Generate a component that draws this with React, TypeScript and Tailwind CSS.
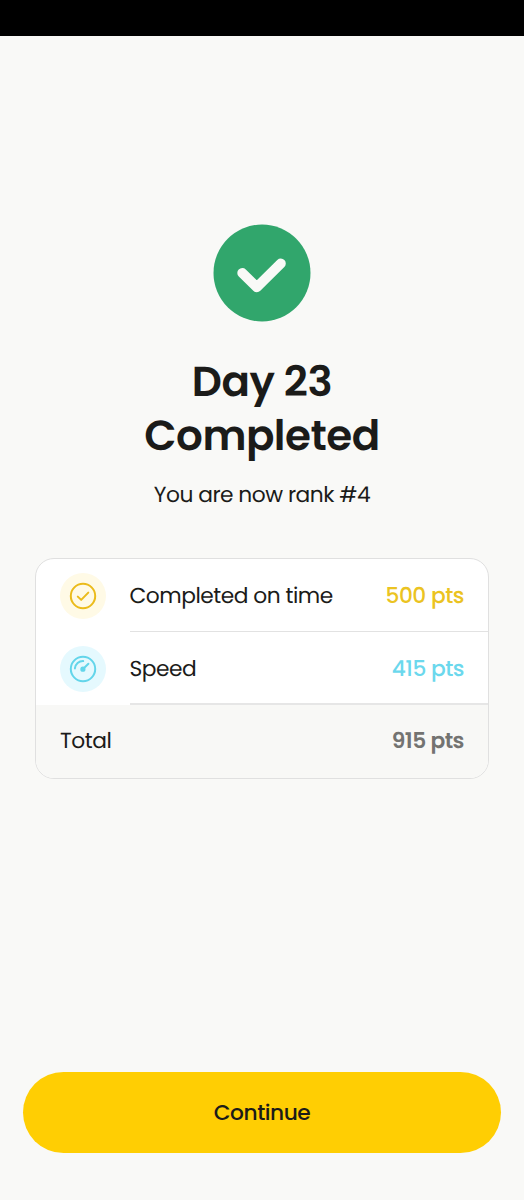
import React from 'react'

type Row = {
  label: string
  points: string
  pointsClass: string
  iconClass: string
  lineClass: string
  icon: React.ReactNode
}

const CheckIcon = () => (
  <svg width="28" height="28" viewBox="0 0 28 28" fill="none" stroke="currentColor" strokeWidth="2" strokeLinecap="round" strokeLinejoin="round">
    <circle cx="14" cy="14" r="12.2" />
    <path d="M8.8 14.6L12.2 17.9L19.3 10.6" />
  </svg>
)

const GaugeIcon = () => (
  <svg width="28" height="28" viewBox="0 0 28 28" fill="none" stroke="currentColor" strokeWidth="2" strokeLinecap="round">
    <circle cx="14" cy="14" r="12.2" />
    <path d="M5.9 13.4A8.1 8.1 0 0 1 14.2 6.1" />
    <path d="M14.3 13.8L19.4 8.7" />
    <circle cx="13.9" cy="14.2" r="1.6" fill="currentColor" />
  </svg>
)

const rows: Row[] = [
  {
    label: 'Completed on time',
    points: '500 pts',
    pointsClass: 'text-[#ebc322]',
    iconClass: 'bg-[#fffae6] text-[#ebbb1b]',
    lineClass: 'border-b border-[#e2e2e2]',
    icon: <CheckIcon />,
  },
  {
    label: 'Speed',
    points: '415 pts',
    pointsClass: 'text-[#6bd8ed]',
    iconClass: 'bg-[#e5f9fe] text-[#63d5ea]',
    lineClass: 'border-b-2 border-[#e6e6e6]',
    icon: <GaugeIcon />,
  },
]

const App = () => {
  return (
    <div className="flex h-[1200px] w-[524px] flex-col bg-[#f9f9f7] font-['Poppins','Inter',sans-serif] text-[21.75px] tracking-[-0.48px] text-[#1b1b19] [text-rendering:geometricPrecision]">
      <div className="h-9 shrink-0 bg-black" />

      <main className="flex flex-1 flex-col items-center pt-[188px]">
        <svg width="98" height="98" viewBox="0 0 98 98" fill="none">
          <circle cx="49" cy="49" r="48.5" fill="#31a66c" />
          <path d="M29.3 49L43.8 63.2L67.8 39.5" stroke="#f9f9f7" strokeWidth="10" strokeLinecap="round" strokeLinejoin="round" />
        </svg>

        <h1 className="mt-[33px] text-center text-[42px] font-semibold leading-[54px] tracking-[-0.5px]">
          <span className="block">Day 23</span>
          <span className="block">Completed</span>
        </h1>
        <p className="mt-4 leading-8">You are now rank #4</p>

        <section className="mt-[47px] w-[454px] overflow-hidden rounded-[19px] border-[1.5px] border-[#e0e0e0] bg-white">
          {rows.map((row) => (
            <div key={row.label} className="flex h-[73px] pl-6">
              <div className={`mt-[13.5px] flex size-[46px] shrink-0 items-center justify-center rounded-full ${row.iconClass}`}>
                {row.icon}
              </div>
              <div className={`ml-[23.5px] flex flex-1 items-center justify-between pr-6 pt-[3px] ${row.lineClass}`}>
                <span>{row.label}</span>
                <span className={`font-medium ${row.pointsClass}`}>{row.points}</span>
              </div>
            </div>
          ))}
          <div className="flex h-[73px] items-center justify-between bg-[#f8f8f6] px-6">
            <span>Total</span>
            <span className="font-semibold text-[#737371]">915 pts</span>
          </div>
        </section>
      </main>

      <footer className="px-[23px] pb-[47px]">
        <button className="h-[81px] w-full rounded-full bg-[#ffce03] pt-0.5 font-medium">Continue</button>
      </footer>
    </div>
  )
}

export default App
